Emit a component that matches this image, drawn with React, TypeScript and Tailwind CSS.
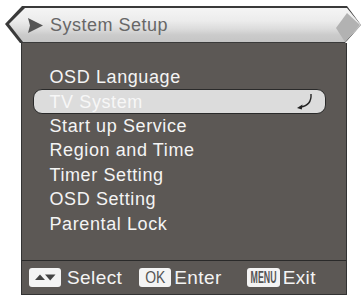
import React from "react";

const items = [
  "OSD Language",
  "TV System",
  "Start up Service",
  "Region and Time",
  "Timer Setting",
  "OSD Setting",
  "Parental Lock",
];

export default function App() {
  return (
    <div className="w-[362px] h-[298px] bg-white flex flex-col font-['Liberation_Sans',Arial,sans-serif] overflow-hidden">
      {/* Header banner */}
      <div className="relative ml-[5px] mt-[6px] w-[357px] h-[37px] shrink-0">
        <div className="absolute inset-0 bg-[#3a3a3a] [clip-path:polygon(17px_0,342px_0,356px_19px,340px_37px,15px_37px,0_18px)]" />
        <div className="absolute inset-0 bg-[linear-gradient(to_bottom,#f6f6f6_0%,#ececec_40%,#dcdcdc_62%,#cbcbcb_78%,#c4c4c4_100%)] [clip-path:polygon(20px_2px,342px_2px,356px_19px,340px_36px,18px_36px,4px_18px)]" />
        <div className="absolute inset-0 bg-[#b2b2b2] [clip-path:polygon(331px_22px,342px_7px,355px_19px,340px_36px)]" />
        <div className="relative flex items-center h-full pl-[23px]">
          <svg width="15" height="15" viewBox="0 0 15 15" className="shrink-0 mt-[1px]">
            <polygon points="0,0 15,7.5 0,15 2,7.5" fill="#555555" />
          </svg>
          <span className="ml-[7px] text-[18px] tracking-[0.5px] text-[#676767] leading-none">
            System Setup
          </span>
        </div>
      </div>

      {/* Body */}
      <div className="ml-[21px] w-[326px] h-[252px] bg-[#5c5855] border-x border-b border-[#333333] flex flex-col shrink-0">
        <div className="flex flex-col pt-[22px]">
          {items.map((t, i) => {
            const sel = i === 1;
            return (
              <div
                key={t}
                className={
                  sel
                    ? "ml-[11px] w-[293px] h-[24.4px] flex items-center rounded-[9px] border-[1.5px] border-[#2a2a2a] bg-[#dcdcdc] pl-[15.5px]"
                    : "ml-[11px] w-[293px] h-[24.4px] flex items-center border-[1.5px] border-transparent pl-[15.5px]"
                }
              >
                <span
                  className={
                    sel
                      ? "text-[18px] tracking-[0.6px] text-[#f7f7f7] leading-none"
                      : "text-[18px] tracking-[0.6px] text-[#f4f4f4] leading-none"
                  }
                >
                  {t}
                </span>
                {sel && (
                  <svg width="17" height="17" viewBox="0 0 17 17" className="ml-auto mr-[12px]">
                    <path d="M15 1 C15.5 8.5 11.5 13 4.5 14" stroke="#222" strokeWidth="1.4" fill="none" />
                    <polygon points="1,15 6.5,11.5 5.8,16.5" fill="#222" />
                  </svg>
                )}
              </div>
            );
          })}
        </div>

        {/* Footer */}
        <div className="mt-auto h-[34px] border-t border-[#2a2a2a] flex items-center pl-[7px] text-[19px] text-[#f4f4f4] tracking-[0.4px] leading-none">
          <div className="w-[32px] h-[19px] bg-[#f4f4f4] rounded-[3px] flex items-center justify-center shrink-0">
            <svg width="21" height="7" viewBox="0 0 21 7">
              <polygon points="0,6 5,0.5 10,6" fill="#444" />
              <polygon points="10,0.5 20.5,0.5 15.2,6.5" fill="#444" />
            </svg>
          </div>
          <span className="ml-[6px]">Select</span>
          <div className="ml-[17px] w-[32px] h-[19px] bg-[#f4f4f4] rounded-[3px] flex items-center justify-center shrink-0">
            <span className="inline-block text-[17px] text-[#555] scale-x-[0.82] tracking-normal">OK</span>
          </div>
          <span className="ml-[3px]">Enter</span>
          <div className="ml-[25px] w-[33px] h-[19px] bg-[#f4f4f4] rounded-[3px] flex items-center justify-center shrink-0">
            <span className="inline-block text-[16px] font-bold text-[#555] scale-x-[0.55] tracking-normal">MENU</span>
          </div>
          <span className="ml-[3px]">Exit</span>
        </div>
      </div>
    </div>
  );
}
